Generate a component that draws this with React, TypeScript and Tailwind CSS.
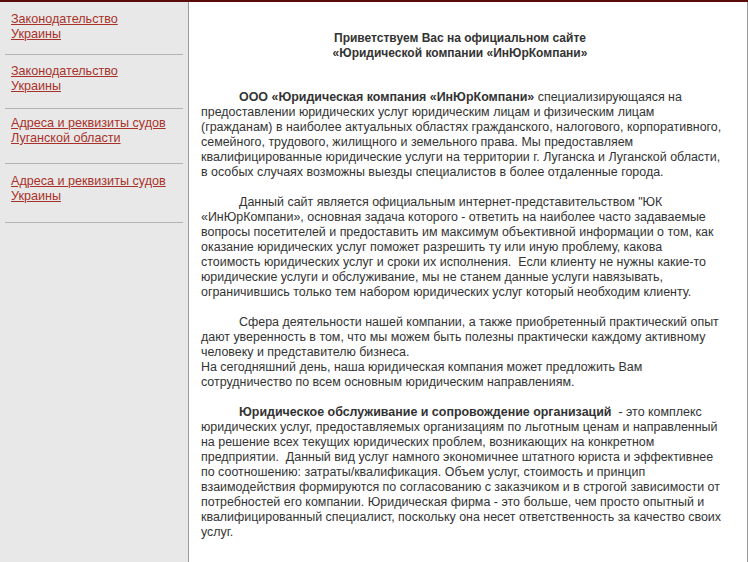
import React from "react";

const items: { lines: string[]; cls: string }[] = [
  { lines: ["Законодательство", "Украины"], cls: "pt-[10px] pb-[12px]" },
  { lines: ["Законодательство", "Украины"], cls: "pt-[9px] pb-[14px]" },
  { lines: ["Адреса и реквизиты судов", "Луганской области"], cls: "pt-[7px] pb-[17px]" },
  { lines: ["Адреса и реквизиты судов", "Украины"], cls: "pt-[10px] pb-[18px]" },
];

type Para = { bold?: string; lines: string[] };

const paras: Para[] = [
  {
    bold: "ООО «Юридическая компания «ИнЮрКомпани»",
    lines: [
      " специализирующаяся на",
      "предоставлении юридических услуг юридическим лицам и физическим лицам",
      "(гражданам) в наиболее актуальных областях гражданского, налогового, корпоративного,",
      "семейного, трудового, жилищного и земельного права. Мы предоставляем",
      "квалифицированные юридические услуги на территории г. Луганска и Луганской области,",
      "в особых случаях возможны выезды специалистов в более отдаленные города.",
    ],
  },
  {
    lines: [
      "Данный сайт является официальным интернет-представительством \"ЮК",
      "«ИнЮрКомпани», основная задача которого - ответить на наиболее часто задаваемые",
      "вопросы посетителей и предоставить им максимум объективной информации о том, как",
      "оказание юридических услуг поможет разрешить ту или иную проблему, какова",
      "стоимость юридических услуг и сроки их исполнения.\u00a0 Если клиенту не нужны какие-то",
      "юридические услуги и обслуживание, мы не станем данные услуги навязывать,",
      "ограничившись только тем набором юридических услуг который необходим клиенту.",
    ],
  },
  {
    lines: [
      "Сфера деятельности нашей компании, а также приобретенный практический опыт",
      "дают уверенность в том, что мы можем быть полезны практически каждому активному",
      "человеку и представителю бизнеса.",
      "На сегодняшний день, наша юридическая компания может предложить Вам",
      "сотрудничество по всем основным юридическим направлениям.",
    ],
  },
  {
    bold: "Юридическое обслуживание и сопровождение организаций",
    lines: [
      "\u00a0 - это комплекс",
      "юридических услуг, предоставляемых организациям по льготным ценам и направленный",
      "на решение всех текущих юридических проблем, возникающих на конкретном",
      "предприятии.\u00a0 Данный вид услуг намного экономичнее штатного юриста и эффективнее",
      "по соотношению: затраты/квалификация. Объем услуг, стоимость и принцип",
      "взаимодействия формируются по согласованию с заказчиком и в строгой зависимости от",
      "потребностей его компании. Юридическая фирма - это больше, чем просто опытный и",
      "квалифицированный специалист, поскольку она несет ответственность за качество своих",
      "услуг.",
    ],
  },
];

export default function App() {
  return (
    <div className="flex min-h-screen border-t-2 border-[#5a0a0a] font-['Liberation_Sans',Arial,sans-serif] leading-[15px]">
      <aside className="w-[189px] shrink-0 bg-[#e8e8e8] border-r border-[#999999] px-[5px] text-[12.6px]">
        {items.map((it, i) => (
          <div key={i} className={`border-b border-[#b4b4b4] pl-[6px] ${it.cls}`}>
            <a href="#" className="text-[#a8322a] underline decoration-[#a8322a]">
              {it.lines[0]}
              <br />
              {it.lines[1]}
            </a>
          </div>
        ))}
      </aside>
      <main className="flex-1 bg-white border-r border-[#999999] pl-[12px] pr-[22px] pt-[29px] text-[#333333] text-[12.45px]">
        <div className="font-bold text-[12px] leading-[14.5px] flex flex-col items-center pr-[6px]">
          <div className="whitespace-nowrap">Приветствуем Вас на официальном сайте</div>
          <div className="whitespace-nowrap">«Юридической компании «ИнЮрКомпани»</div>
        </div>
        <div className="h-[30px]" />
        {paras.map((p, i) => (
          <div key={i} className="mb-[15px]">
            {p.lines.map((l, j) => (
              <div key={j} className={`whitespace-pre ${j === 0 ? "pl-[38px]" : ""}`}>
                {j === 0 && p.bold ? <b>{p.bold}</b> : null}
                {l}
              </div>
            ))}
          </div>
        ))}
      </main>
    </div>
  );
}
